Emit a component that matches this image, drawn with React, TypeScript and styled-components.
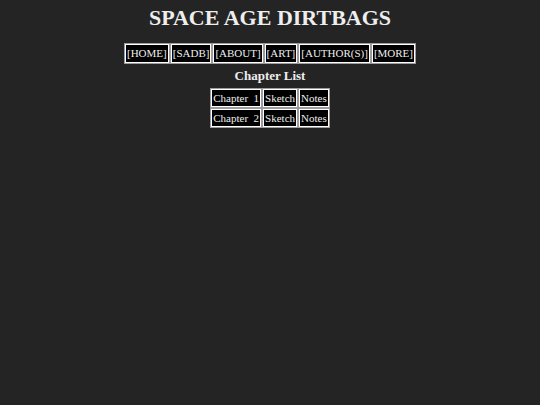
import React from "react";
import styled, { createGlobalStyle } from "styled-components";

const GlobalStyle = createGlobalStyle`
  html, body {
    margin: 0;
    padding: 0;
    background: #242424;
  }
  body {
    font-family: "Liberation Serif", "Times New Roman", serif;
    color: #eeeeee;
  }
`;

const navItems = ["[HOME]", "[SADB]", "[ABOUT]", "[ART]", "[AUTHOR(S)]", "[MORE]"];

const chapters = [1, 2];

const App = () => {
  return (
    <>
      <GlobalStyle />
      <Page>
        <Title>SPACE AGE DIRTBAGS</Title>
        <Nav>
          {navItems.map((item) => (
            <NavLink key={item} href="#">
              {item}
            </NavLink>
          ))}
        </Nav>
        <SectionTitle>Chapter List</SectionTitle>
        <ChapterTable>
          <tbody>
            {chapters.map((n) => (
              <tr key={n}>
                <Cell>
                  <CellLink href="#">Chapter&nbsp;&nbsp;{n}</CellLink>
                </Cell>
                <Cell>
                  <CellLink href="#">Sketch</CellLink>
                </Cell>
                <Cell>
                  <CellLink href="#">Notes</CellLink>
                </Cell>
              </tr>
            ))}
          </tbody>
        </ChapterTable>
      </Page>
    </>
  );
};

export default App;

const Page = styled.div`
  display: flex;
  flex-direction: column;
  align-items: center;
  padding-top: 6px;
  min-height: 405px;
  box-sizing: border-box;
`;

const Title = styled.h1`
  margin: 0;
  font-size: 22px;
  font-weight: bold;
  line-height: 24px;
  color: #eeeeee;
`;

const Nav = styled.nav`
  display: flex;
  gap: 2px;
  margin-top: 14px;
`;

const NavLink = styled.a`
  display: block;
  background: #000;
  color: #eeeeee;
  text-decoration: none;
  font-size: 11px;
  line-height: 13px;
  padding: 2px 1px;
  border: 1px solid #ffffff;
  box-shadow: 0 0 0 1px #9c9c9c;
`;

const SectionTitle = styled.h2`
  margin: 5px 0 0;
  font-size: 13px;
  font-weight: bold;
  line-height: 16px;
`;

const ChapterTable = styled.table`
  margin-top: 3px;
  border-collapse: separate;
  border-spacing: 2px;
`;

const Cell = styled.td`
  background: #000;
  border: 1px solid #ffffff;
  box-shadow: 0 0 0 1px #9c9c9c;
  padding: 1px 1px;
  font-size: 11px;
  line-height: 14px;
`;

const CellLink = styled.a`
  color: #eeeeee;
  text-decoration: none;
`;
